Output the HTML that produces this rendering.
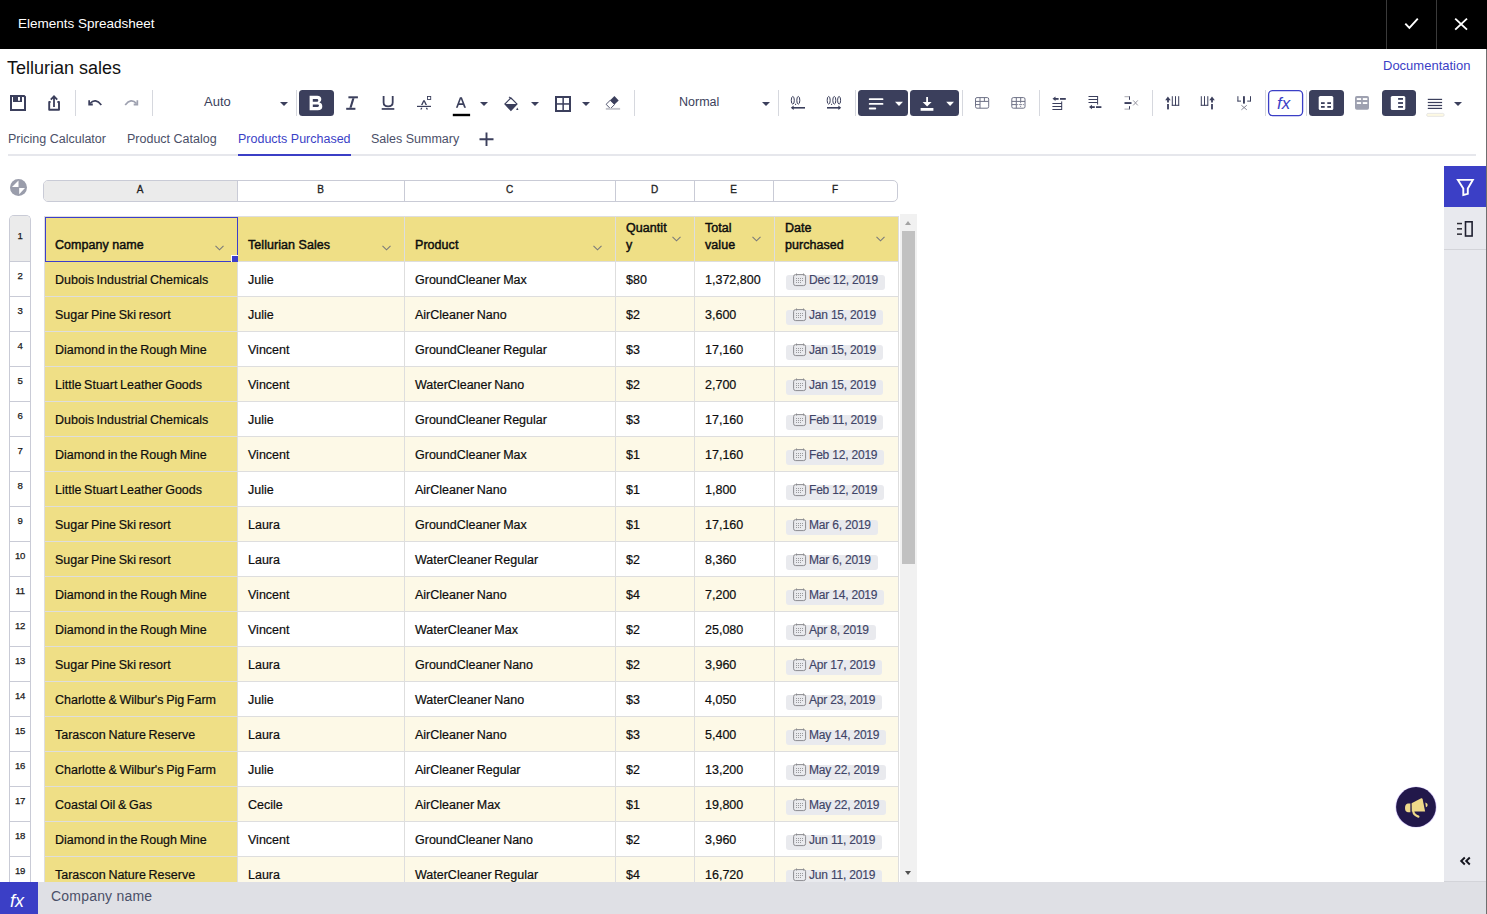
<!DOCTYPE html>
<html><head><meta charset="utf-8">
<style>
*{margin:0;padding:0;box-sizing:border-box}
html,body{width:1487px;height:914px;overflow:hidden;background:#fff;font-family:"Liberation Sans",sans-serif;color:#1a1a1a}
.a{position:absolute}
#title{left:0;top:0;width:1487px;height:49px;background:#000}
#title .t{left:18px;top:16px;font-size:13.5px;color:#fff;line-height:16px;white-space:nowrap}
.vdiv{width:1px;background:#3a3a3a;top:0;height:49px}
#rline{left:1486px;top:49px;width:1px;height:865px;background:#6f6f6f}
.sep{width:1px;height:26px;top:90px;background:#d6d8de}
.ink{fill:#3b3f5c}
.tb{top:90px;height:26px;border-radius:4px;background:#3b3f5c}
.tri{width:0;height:0;border-left:4px solid transparent;border-right:4px solid transparent;border-top:4px solid #3b3f5c}
.colL{font-size:10px;line-height:12px;text-align:center;color:#1e1e1e;-webkit-text-stroke:0.3px #1e1e1e}
.rn{left:10px;width:20px;text-align:center;font-size:9.6px;line-height:12px;color:#1a1a1a;letter-spacing:-0.4px;-webkit-text-stroke:0.25px #1a1a1a}
.hd{font-size:12.5px;line-height:14px;color:#0d0d0d;white-space:nowrap;-webkit-text-stroke:0.45px #0d0d0d;letter-spacing:0.05px}
.dt{font-size:12.5px;line-height:15px;color:#0d0d0d;white-space:nowrap;-webkit-text-stroke:0.2px #0d0d0d;word-spacing:-0.8px}
.chip{height:15px;font-size:12px;line-height:15px;background:#e9eaee;border-radius:3px;padding:0 7px 0 23px;white-space:nowrap}
.dtx{position:relative;top:-2px;letter-spacing:-0.2px;-webkit-text-stroke:0.15px #3f4466;display:inline-block;font-size:12px;line-height:15px;color:#3f4466;white-space:nowrap}
.tab{top:132px;font-size:12.5px;color:#4b4f68;line-height:15px;white-space:nowrap}
</style></head><body>
<div id="title" class="a"><div class="t a">Elements Spreadsheet</div></div>
<div class="a vdiv" style="left:1386px"></div>
<div class="a vdiv" style="left:1436px"></div>
<div id="rline" class="a"></div>

<div class="a" style="left:7px;top:58px;font-size:18px;line-height:20px;color:#111;white-space:nowrap">Tellurian sales</div>
<div class="a" style="left:1383px;top:58px;font-size:13px;line-height:15px;color:#3b3fc6;white-space:nowrap">Documentation</div>

<!-- TOOLBAR -->
<svg class="a" style="left:0;top:0" width="1487" height="160" viewBox="0 0 1487 160">
<defs><path id="tri" d="M0 0 H8 L4 4 Z"/></defs>
<!-- separators -->
<g fill="#d6d8de">
<rect x="75" y="90" width="1" height="26"/><rect x="152" y="90" width="1" height="26"/>
<rect x="296" y="90" width="1" height="26"/><rect x="634" y="90" width="1" height="26"/>
<rect x="778" y="90" width="1" height="26"/><rect x="855" y="90" width="1" height="26"/>
<rect x="962" y="90" width="1" height="26"/><rect x="1039" y="90" width="1" height="26"/>
<rect x="1152" y="90" width="1" height="26"/><rect x="1265" y="90" width="1" height="26"/>
<rect x="1306" y="90" width="1" height="26"/>
</g>
<g fill="#3b3f5c" stroke="none">
<!-- save -->
<path d="M11 96 H24 L25 97 V110 H11 Z" fill="none" stroke="#3b3f5c" stroke-width="2"/>
<rect x="13" y="96" width="9" height="6"/>
<rect x="18" y="97" width="2" height="3.7" fill="#fff"/>
<!-- share -->
<path d="M50.6 102 H49.2 V109.8 H59 V102 H57.4" fill="none" stroke="#3b3f5c" stroke-width="1.9" stroke-linejoin="round"/>
<path d="M54 107 V96.5 M50.8 99.6 L54 96.3 L57.2 99.6" fill="none" stroke="#3b3f5c" stroke-width="1.8"/>
<!-- undo -->
<path d="M90 103.5 Q95.5 97.5 101.3 105" fill="none" stroke="#3b3f5c" stroke-width="1.7"/>
<path d="M88.3 100.3 H90 V103.6 H92.8 V105.4 H88.3 Z"/>
<!-- redo -->
<path d="M125.2 105 Q131 97.5 136.5 103.5" fill="none" stroke="#9ea1b0" stroke-width="1.7"/>
<path d="M138.2 100.3 H136.5 V103.6 H133.7 V105.4 H138.2 Z" fill="#9ea1b0"/>
<!-- arrows -->
<use href="#tri" x="280" y="102"/>
<use href="#tri" x="480" y="102"/>
<use href="#tri" x="531" y="102"/>
<use href="#tri" x="582" y="102"/>
<use href="#tri" x="762" y="102"/>
<use href="#tri" x="1454" y="102"/>
</g>
<!-- bold button -->
<rect x="299" y="90" width="35" height="26" rx="3.5" fill="#3b3f5c"/>
<path d="M309.6 95.7 H317.2 Q321.3 95.7 321.3 99.3 Q321.3 101.9 319.4 102.6 Q322.3 103.4 322.3 106.4 Q322.3 110.2 317.8 110.2 H309.6 Z M312.8 99.1 V101.7 H317.1 Q318.3 101.7 318.3 100.4 Q318.3 99.1 317.1 99.1 Z M312.8 104.4 V106.9 H317.7 Q319 106.9 319 105.6 Q319 104.4 317.7 104.4 Z" fill="#fff" fill-rule="evenodd"/>
<!-- italic -->
<g fill="#3b3f5c">
<rect x="348.4" y="96.3" width="9.5" height="2"/>
<rect x="346.2" y="107.8" width="9.2" height="2"/>
<path d="M352.3 98.3 H354.5 L351.6 107.8 H349.4 Z"/>
<!-- underline -->
<path d="M383.6 96 V102.5 Q383.6 106.3 388.1 106.3 Q392.7 106.3 392.7 102.5 V96" fill="none" stroke="#3b3f5c" stroke-width="1.8"/>
<rect x="381.7" y="108.1" width="12.6" height="1.7"/>
<!-- strike/superscript -->
<rect x="417" y="105.8" width="14" height="1.2"/>
<path d="M421 105 L423.3 100.2 H424.7 L427 105 H425.5 L424 101.8 L422.5 105 Z"/>
<path d="M420.3 109.4 L421 107.7 H422.4 L421.8 109.4 Z M426.5 109.4 L425.8 107.7 H427.2 L428 109.4 Z"/>
<rect x="427.5" y="96.5" width="3.2" height="3" fill="none" stroke="#3b3f5c" stroke-width="0.9"/>
<!-- font color A -->
<path d="M455.9 107.7 L459.9 97.2 H461.9 L466 107.7 H464.1 L463.1 105 H458.7 L457.7 107.7 Z M459.3 103.3 H462.5 L460.9 99.1 Z" fill-rule="evenodd"/>
</g>
<rect x="452.8" y="113.8" width="17.3" height="2.4" fill="#000"/>
<!-- fill bucket -->
<path d="M504.9 104 L510.9 97.9 L517 104 L510.9 110.4 Z" fill="none" stroke="#3b3f5c" stroke-width="1.1"/>
<path d="M504.6 104 H517.3 L510.9 110.6 Z" fill="#3b3f5c"/>
<path d="M509 96.8 L511.6 99.2" stroke="#3b3f5c" stroke-width="1.1"/>
<path d="M517.3 107.6 L518.5 110 H516.1 Z" fill="#3b3f5c"/>
<!-- borders -->
<rect x="556" y="97" width="14" height="14" fill="none" stroke="#3b3f5c" stroke-width="2"/>
<rect x="562.4" y="97" width="1.5" height="14" fill="#3b3f5c"/>
<rect x="556" y="103.2" width="14" height="1.5" fill="#3b3f5c"/>
<!-- eraser -->
<path d="M614.4 96.1 L618.7 100.4 L614.5 104.6 L610.2 100.3 Z" fill="#3b3f5c"/>
<path d="M610.2 100.3 L614.5 104.6 L610.4 108.7 L606.1 104.3 Z" fill="none" stroke="#3b3f5c" stroke-width="0.9"/>
<rect x="605.8" y="107.9" width="14.3" height="1.9" fill="#c3c4cb"/>
<!-- decimals -->
<g fill="none" stroke="#3b3f5c" stroke-width="1">
<ellipse cx="792.8" cy="100.3" rx="1.5" ry="3.8"/>
<ellipse cx="798.3" cy="100.3" rx="1.5" ry="3.8"/>
<ellipse cx="828.7" cy="100.3" rx="1.5" ry="3.8"/>
<ellipse cx="834.3" cy="100.3" rx="1.5" ry="3.8"/>
<ellipse cx="839.1" cy="100.3" rx="1.5" ry="3.8"/>
</g>
<g fill="#3b3f5c">
<rect x="795" y="103.8" width="1.1" height="1.1"/>
<rect x="831" y="103.8" width="1.1" height="1.1"/>
<rect x="792" y="107" width="13" height="1.6"/>
<path d="M790.8 107.8 L793.6 105.6 V110 Z"/>
<rect x="827" y="107" width="13" height="1.6"/>
<path d="M841.2 107.8 L838.4 105.6 V110 Z"/>
</g>
<!-- dark align buttons -->
<rect x="858" y="90" width="50" height="26" rx="3.5" fill="#3b3f5c"/>
<rect x="910" y="90" width="49" height="26" rx="3.5" fill="#3b3f5c"/>
<g fill="#fff">
<rect x="868.8" y="98.2" width="14.6" height="1.9" rx="0.9"/>
<rect x="868.8" y="102.9" width="14.6" height="1.9" rx="0.9"/>
<rect x="868.8" y="107.6" width="7.4" height="1.9" rx="0.9"/>
<path d="M895 101.8 H903 L899 106 Z"/>
<rect x="926.2" y="97" width="1.8" height="7"/>
<path d="M922.6 102 L927.1 106.6 L931.6 102 Z"/>
<rect x="920.6" y="108" width="12.8" height="2.8"/>
<path d="M946.2 101.8 H954 L950.1 106 Z"/>
</g>
<!-- table icons -->
<g fill="none" stroke="#6e7186" stroke-width="1">
<rect x="975.5" y="97.6" width="13.2" height="10.6" rx="1.5"/>
<path d="M975.5 101.4 H988.7 M980 97.6 V108.2 M984.4 97.6 V101.4 M975.5 104.6 H980"/>
<rect x="1011.8" y="97.6" width="13.2" height="10.6" rx="1.5"/>
<path d="M1011.8 101.4 H1025 M1016.3 97.6 V108.2 M1020.7 97.6 V101.4 M1011.8 104.6 H1016.3"/>
<path d="M1016.8 104.6 H1024.6 M1020.6 101.8 V107.6" stroke-dasharray="1 1"/>
</g>
<!-- insert row above -->
<g fill="#3b3f5c">
<path d="M1052.5 98.8 L1055.5 96.6 V101 Z"/>
<rect x="1055" y="98" width="3.6" height="1.8"/>
<rect x="1060" y="98" width="5.8" height="1.8"/>
<rect x="1052.4" y="103" width="9.6" height="1"/>
<rect x="1052.4" y="106" width="9.6" height="1"/>
<rect x="1052.4" y="109" width="9.6" height="1"/>
<rect x="1061.2" y="101.4" width="1" height="8.6"/>
<!-- insert row below -->
<rect x="1088.5" y="96" width="9.4" height="1"/>
<rect x="1088.5" y="99" width="9.4" height="1"/>
<rect x="1088.5" y="102" width="9.4" height="1"/>
<rect x="1097.1" y="96" width="1" height="8.6"/>
<path d="M1089 107 L1092 104.8 V109.2 Z"/>
<rect x="1091.5" y="106.2" width="3.3" height="1.8"/>
<rect x="1096" y="106.2" width="5.4" height="1.8"/>
<!-- delete row -->
<rect x="1124.5" y="102.1" width="7" height="1.9"/>
<rect x="1129" y="96.2" width="1" height="3.6"/>
<rect x="1129" y="106.2" width="1" height="3.2"/>
</g>
<rect x="1124.5" y="96.2" width="5" height="1" fill="#a8a8b0"/>
<rect x="1124.5" y="108.6" width="5" height="1" fill="#a8a8b0"/>
<path d="M1133.2 100.4 L1137.8 105.4 M1137.8 100.4 L1133.2 105.4" stroke="#8a8a96" stroke-width="0.9"/>
<!-- insert col left -->
<g fill="#3b3f5c">
<path d="M1165.2 100.2 L1167.9 96.6 L1170.7 100.2 Z"/>
<rect x="1167.1" y="99.5" width="1.8" height="3"/>
<rect x="1167.1" y="104" width="1.8" height="5.4"/>
<rect x="1171.8" y="96.2" width="1" height="9.4"/>
<rect x="1175" y="96.2" width="1" height="9.4"/>
<rect x="1178.2" y="96.2" width="1" height="9.4"/>
<rect x="1171.8" y="104.8" width="7.4" height="1"/>
<!-- insert col right -->
<rect x="1200.8" y="96.2" width="1" height="9.4"/>
<rect x="1204" y="96.2" width="1" height="9.4"/>
<rect x="1207.3" y="96.2" width="1" height="9.4"/>
<rect x="1200.8" y="104.8" width="7.4" height="1"/>
<path d="M1209.3 100.2 L1212 96.6 L1214.8 100.2 Z"/>
<rect x="1211.1" y="99.5" width="1.8" height="3"/>
<rect x="1211.1" y="104" width="1.8" height="5.4"/>
<!-- delete col -->
<rect x="1237.4" y="96.2" width="1" height="5.2"/>
<rect x="1237.4" y="100.6" width="3.6" height="1"/>
<rect x="1250" y="96.2" width="1" height="5.2"/>
<rect x="1247.2" y="100.6" width="3.6" height="1"/>
<rect x="1243" y="96.2" width="1.9" height="7.4"/>
</g>
<path d="M1241.4 105.3 L1246.8 109.8 M1246.8 105.3 L1241.4 109.8" stroke="#7a7a8a" stroke-width="0.9"/>
<!-- fx button -->
<rect x="1268.6" y="90.6" width="34" height="25" rx="4" fill="#fff" stroke="#3b3fc6" stroke-width="1.3"/>
<!-- dark button 3 -->
<rect x="1309" y="90" width="35" height="26" rx="3.5" fill="#3b3f5c"/>
<rect x="1318.7" y="96" width="14.6" height="14" rx="1.6" fill="#fff"/>
<g fill="#3b3f5c">
<rect x="1321" y="102.2" width="3.7" height="1.8"/><rect x="1327.3" y="102.2" width="3.7" height="1.8"/>
<rect x="1321" y="106" width="3.7" height="1.8"/><rect x="1327.3" y="106" width="3.7" height="1.8"/>
</g>
<!-- gray icon -->
<rect x="1355" y="96" width="14" height="13.8" rx="1.8" fill="#9ea1b0"/>
<g fill="#fff">
<rect x="1356.8" y="98.1" width="4.3" height="1.9"/><rect x="1362.8" y="98.1" width="4.5" height="1.9"/>
<rect x="1356.8" y="102.1" width="4.3" height="1.9"/><rect x="1362.8" y="102.1" width="4.5" height="1.9"/>
</g>
<!-- dark button 4 -->
<rect x="1382" y="90" width="34" height="26" rx="3.5" fill="#3b3f5c"/>
<rect x="1390.8" y="96" width="14.5" height="14" rx="1.6" fill="#fff"/>
<g fill="#3b3f5c">
<rect x="1398.1" y="98" width="4.9" height="1.8"/>
<rect x="1398.1" y="102.1" width="4.9" height="1.8"/>
<rect x="1398.1" y="106" width="4.9" height="1.8"/>
<!-- lines icon -->
<rect x="1427.8" y="98.8" width="14.3" height="1.2"/>
<rect x="1427.8" y="101.9" width="14.3" height="1.2"/>
<rect x="1427.8" y="104.9" width="14.3" height="1.2"/>
<rect x="1427.8" y="107.8" width="14.3" height="1.2"/>
</g>
<rect x="1426.6" y="113.4" width="17.6" height="3" rx="1.5" fill="#fdf9e3" stroke="#e2e2e2" stroke-width="0.8"/>
</svg>
<div class="a" style="left:204px;top:94px;font-size:13px;line-height:15px;color:#3b3f5c;white-space:nowrap">Auto</div>
<div class="a" style="left:679px;top:95px;font-size:12.5px;line-height:15px;color:#3b3f5c;white-space:nowrap">Normal</div>
<div class="a" style="left:1277px;top:94px;font-size:17px;line-height:20px;font-style:italic;color:#3b3fc6;white-space:nowrap">fx</div>


<!-- TABS -->
<div class="a tab" style="left:8px">Pricing Calculator</div>
<div class="a tab" style="left:127px">Product Catalog</div>
<div class="a tab" style="left:238px;color:#3b3fc6">Products Purchased</div>
<div class="a tab" style="left:371px">Sales Summary</div>
<div class="a" style="left:8px;top:154px;width:1468px;height:2px;background:#e6e7ec"></div>
<div class="a" style="left:238px;top:154px;width:113px;height:2px;background:#3b3fc6"></div>

<!-- GRID -->
<div class="a" style="left:0;top:0;width:1487px;height:882px;overflow:hidden">
<div class="a" style="left:9px;top:215px;width:22px;height:700px;border:1px solid #c9cbd6;border-bottom:none;border-radius:5px 5px 0 0;background:#fff"></div>
<div class="a" style="left:10px;top:216px;width:20px;height:45px;background:#ebebeb;border-radius:4px 4px 0 0"></div>
<div class="a" style="left:43px;top:180px;width:855px;height:22px;border:1px solid #c9cbd6;border-radius:5px;background:#fff;overflow:hidden"><div class="a" style="left:0;top:0;width:193px;height:20px;background:#ebebeb"></div></div>
<div class="a colL" style="left:43px;width:194px;top:184px">A</div>
<div class="a" style="left:237px;top:181px;width:1px;height:20px;background:#c9cbd6"></div>
<div class="a colL" style="left:237px;width:167px;top:184px">B</div>
<div class="a" style="left:404px;top:181px;width:1px;height:20px;background:#c9cbd6"></div>
<div class="a colL" style="left:404px;width:211px;top:184px">C</div>
<div class="a" style="left:615px;top:181px;width:1px;height:20px;background:#c9cbd6"></div>
<div class="a colL" style="left:615px;width:79px;top:184px">D</div>
<div class="a" style="left:694px;top:181px;width:1px;height:20px;background:#c9cbd6"></div>
<div class="a colL" style="left:694px;width:79px;top:184px">E</div>
<div class="a" style="left:773px;top:181px;width:1px;height:20px;background:#c9cbd6"></div>
<div class="a colL" style="left:773px;width:124px;top:184px">F</div>
<div class="a" style="left:44px;top:216px;width:855px;height:676px;background:#dedede"></div>
<div class="a" style="left:45px;top:217px;width:192px;height:44px;background:#efdf86"></div>
<div class="a" style="left:238px;top:217px;width:166px;height:44px;background:#efdf86"></div>
<div class="a" style="left:405px;top:217px;width:210px;height:44px;background:#efdf86"></div>
<div class="a" style="left:616px;top:217px;width:78px;height:44px;background:#efdf86"></div>
<div class="a" style="left:695px;top:217px;width:79px;height:44px;background:#efdf86"></div>
<div class="a" style="left:775px;top:217px;width:123px;height:44px;background:#efdf86"></div>
<div class="a" style="left:45px;top:262px;width:192px;height:34px;background:#efdf86"></div>
<div class="a" style="left:238px;top:262px;width:166px;height:34px;background:#ffffff"></div>
<div class="a" style="left:405px;top:262px;width:210px;height:34px;background:#ffffff"></div>
<div class="a" style="left:616px;top:262px;width:78px;height:34px;background:#ffffff"></div>
<div class="a" style="left:695px;top:262px;width:79px;height:34px;background:#ffffff"></div>
<div class="a" style="left:775px;top:262px;width:123px;height:34px;background:#ffffff"></div>
<div class="a" style="left:45px;top:297px;width:192px;height:34px;background:#efdf86"></div>
<div class="a" style="left:238px;top:297px;width:166px;height:34px;background:#fdf9e7"></div>
<div class="a" style="left:405px;top:297px;width:210px;height:34px;background:#fdf9e7"></div>
<div class="a" style="left:616px;top:297px;width:78px;height:34px;background:#fdf9e7"></div>
<div class="a" style="left:695px;top:297px;width:79px;height:34px;background:#fdf9e7"></div>
<div class="a" style="left:775px;top:297px;width:123px;height:34px;background:#fdf9e7"></div>
<div class="a" style="left:45px;top:332px;width:192px;height:34px;background:#efdf86"></div>
<div class="a" style="left:238px;top:332px;width:166px;height:34px;background:#ffffff"></div>
<div class="a" style="left:405px;top:332px;width:210px;height:34px;background:#ffffff"></div>
<div class="a" style="left:616px;top:332px;width:78px;height:34px;background:#ffffff"></div>
<div class="a" style="left:695px;top:332px;width:79px;height:34px;background:#ffffff"></div>
<div class="a" style="left:775px;top:332px;width:123px;height:34px;background:#ffffff"></div>
<div class="a" style="left:45px;top:367px;width:192px;height:34px;background:#efdf86"></div>
<div class="a" style="left:238px;top:367px;width:166px;height:34px;background:#fdf9e7"></div>
<div class="a" style="left:405px;top:367px;width:210px;height:34px;background:#fdf9e7"></div>
<div class="a" style="left:616px;top:367px;width:78px;height:34px;background:#fdf9e7"></div>
<div class="a" style="left:695px;top:367px;width:79px;height:34px;background:#fdf9e7"></div>
<div class="a" style="left:775px;top:367px;width:123px;height:34px;background:#fdf9e7"></div>
<div class="a" style="left:45px;top:402px;width:192px;height:34px;background:#efdf86"></div>
<div class="a" style="left:238px;top:402px;width:166px;height:34px;background:#ffffff"></div>
<div class="a" style="left:405px;top:402px;width:210px;height:34px;background:#ffffff"></div>
<div class="a" style="left:616px;top:402px;width:78px;height:34px;background:#ffffff"></div>
<div class="a" style="left:695px;top:402px;width:79px;height:34px;background:#ffffff"></div>
<div class="a" style="left:775px;top:402px;width:123px;height:34px;background:#ffffff"></div>
<div class="a" style="left:45px;top:437px;width:192px;height:34px;background:#efdf86"></div>
<div class="a" style="left:238px;top:437px;width:166px;height:34px;background:#fdf9e7"></div>
<div class="a" style="left:405px;top:437px;width:210px;height:34px;background:#fdf9e7"></div>
<div class="a" style="left:616px;top:437px;width:78px;height:34px;background:#fdf9e7"></div>
<div class="a" style="left:695px;top:437px;width:79px;height:34px;background:#fdf9e7"></div>
<div class="a" style="left:775px;top:437px;width:123px;height:34px;background:#fdf9e7"></div>
<div class="a" style="left:45px;top:472px;width:192px;height:34px;background:#efdf86"></div>
<div class="a" style="left:238px;top:472px;width:166px;height:34px;background:#ffffff"></div>
<div class="a" style="left:405px;top:472px;width:210px;height:34px;background:#ffffff"></div>
<div class="a" style="left:616px;top:472px;width:78px;height:34px;background:#ffffff"></div>
<div class="a" style="left:695px;top:472px;width:79px;height:34px;background:#ffffff"></div>
<div class="a" style="left:775px;top:472px;width:123px;height:34px;background:#ffffff"></div>
<div class="a" style="left:45px;top:507px;width:192px;height:34px;background:#efdf86"></div>
<div class="a" style="left:238px;top:507px;width:166px;height:34px;background:#fdf9e7"></div>
<div class="a" style="left:405px;top:507px;width:210px;height:34px;background:#fdf9e7"></div>
<div class="a" style="left:616px;top:507px;width:78px;height:34px;background:#fdf9e7"></div>
<div class="a" style="left:695px;top:507px;width:79px;height:34px;background:#fdf9e7"></div>
<div class="a" style="left:775px;top:507px;width:123px;height:34px;background:#fdf9e7"></div>
<div class="a" style="left:45px;top:542px;width:192px;height:34px;background:#efdf86"></div>
<div class="a" style="left:238px;top:542px;width:166px;height:34px;background:#ffffff"></div>
<div class="a" style="left:405px;top:542px;width:210px;height:34px;background:#ffffff"></div>
<div class="a" style="left:616px;top:542px;width:78px;height:34px;background:#ffffff"></div>
<div class="a" style="left:695px;top:542px;width:79px;height:34px;background:#ffffff"></div>
<div class="a" style="left:775px;top:542px;width:123px;height:34px;background:#ffffff"></div>
<div class="a" style="left:45px;top:577px;width:192px;height:34px;background:#efdf86"></div>
<div class="a" style="left:238px;top:577px;width:166px;height:34px;background:#fdf9e7"></div>
<div class="a" style="left:405px;top:577px;width:210px;height:34px;background:#fdf9e7"></div>
<div class="a" style="left:616px;top:577px;width:78px;height:34px;background:#fdf9e7"></div>
<div class="a" style="left:695px;top:577px;width:79px;height:34px;background:#fdf9e7"></div>
<div class="a" style="left:775px;top:577px;width:123px;height:34px;background:#fdf9e7"></div>
<div class="a" style="left:45px;top:612px;width:192px;height:34px;background:#efdf86"></div>
<div class="a" style="left:238px;top:612px;width:166px;height:34px;background:#ffffff"></div>
<div class="a" style="left:405px;top:612px;width:210px;height:34px;background:#ffffff"></div>
<div class="a" style="left:616px;top:612px;width:78px;height:34px;background:#ffffff"></div>
<div class="a" style="left:695px;top:612px;width:79px;height:34px;background:#ffffff"></div>
<div class="a" style="left:775px;top:612px;width:123px;height:34px;background:#ffffff"></div>
<div class="a" style="left:45px;top:647px;width:192px;height:34px;background:#efdf86"></div>
<div class="a" style="left:238px;top:647px;width:166px;height:34px;background:#fdf9e7"></div>
<div class="a" style="left:405px;top:647px;width:210px;height:34px;background:#fdf9e7"></div>
<div class="a" style="left:616px;top:647px;width:78px;height:34px;background:#fdf9e7"></div>
<div class="a" style="left:695px;top:647px;width:79px;height:34px;background:#fdf9e7"></div>
<div class="a" style="left:775px;top:647px;width:123px;height:34px;background:#fdf9e7"></div>
<div class="a" style="left:45px;top:682px;width:192px;height:34px;background:#efdf86"></div>
<div class="a" style="left:238px;top:682px;width:166px;height:34px;background:#ffffff"></div>
<div class="a" style="left:405px;top:682px;width:210px;height:34px;background:#ffffff"></div>
<div class="a" style="left:616px;top:682px;width:78px;height:34px;background:#ffffff"></div>
<div class="a" style="left:695px;top:682px;width:79px;height:34px;background:#ffffff"></div>
<div class="a" style="left:775px;top:682px;width:123px;height:34px;background:#ffffff"></div>
<div class="a" style="left:45px;top:717px;width:192px;height:34px;background:#efdf86"></div>
<div class="a" style="left:238px;top:717px;width:166px;height:34px;background:#fdf9e7"></div>
<div class="a" style="left:405px;top:717px;width:210px;height:34px;background:#fdf9e7"></div>
<div class="a" style="left:616px;top:717px;width:78px;height:34px;background:#fdf9e7"></div>
<div class="a" style="left:695px;top:717px;width:79px;height:34px;background:#fdf9e7"></div>
<div class="a" style="left:775px;top:717px;width:123px;height:34px;background:#fdf9e7"></div>
<div class="a" style="left:45px;top:752px;width:192px;height:34px;background:#efdf86"></div>
<div class="a" style="left:238px;top:752px;width:166px;height:34px;background:#ffffff"></div>
<div class="a" style="left:405px;top:752px;width:210px;height:34px;background:#ffffff"></div>
<div class="a" style="left:616px;top:752px;width:78px;height:34px;background:#ffffff"></div>
<div class="a" style="left:695px;top:752px;width:79px;height:34px;background:#ffffff"></div>
<div class="a" style="left:775px;top:752px;width:123px;height:34px;background:#ffffff"></div>
<div class="a" style="left:45px;top:787px;width:192px;height:34px;background:#efdf86"></div>
<div class="a" style="left:238px;top:787px;width:166px;height:34px;background:#fdf9e7"></div>
<div class="a" style="left:405px;top:787px;width:210px;height:34px;background:#fdf9e7"></div>
<div class="a" style="left:616px;top:787px;width:78px;height:34px;background:#fdf9e7"></div>
<div class="a" style="left:695px;top:787px;width:79px;height:34px;background:#fdf9e7"></div>
<div class="a" style="left:775px;top:787px;width:123px;height:34px;background:#fdf9e7"></div>
<div class="a" style="left:45px;top:822px;width:192px;height:34px;background:#efdf86"></div>
<div class="a" style="left:238px;top:822px;width:166px;height:34px;background:#ffffff"></div>
<div class="a" style="left:405px;top:822px;width:210px;height:34px;background:#ffffff"></div>
<div class="a" style="left:616px;top:822px;width:78px;height:34px;background:#ffffff"></div>
<div class="a" style="left:695px;top:822px;width:79px;height:34px;background:#ffffff"></div>
<div class="a" style="left:775px;top:822px;width:123px;height:34px;background:#ffffff"></div>
<div class="a" style="left:45px;top:857px;width:192px;height:34px;background:#efdf86"></div>
<div class="a" style="left:238px;top:857px;width:166px;height:34px;background:#fdf9e7"></div>
<div class="a" style="left:405px;top:857px;width:210px;height:34px;background:#fdf9e7"></div>
<div class="a" style="left:616px;top:857px;width:78px;height:34px;background:#fdf9e7"></div>
<div class="a" style="left:695px;top:857px;width:79px;height:34px;background:#fdf9e7"></div>
<div class="a" style="left:775px;top:857px;width:123px;height:34px;background:#fdf9e7"></div>
<div class="a rn" style="top:230px">1</div>
<div class="a" style="left:10px;top:261px;width:20px;height:1px;background:#c9cbd6"></div>
<div class="a rn" style="top:270px">2</div>
<div class="a" style="left:10px;top:296px;width:20px;height:1px;background:#c9cbd6"></div>
<div class="a rn" style="top:305px">3</div>
<div class="a" style="left:10px;top:331px;width:20px;height:1px;background:#c9cbd6"></div>
<div class="a rn" style="top:340px">4</div>
<div class="a" style="left:10px;top:366px;width:20px;height:1px;background:#c9cbd6"></div>
<div class="a rn" style="top:375px">5</div>
<div class="a" style="left:10px;top:401px;width:20px;height:1px;background:#c9cbd6"></div>
<div class="a rn" style="top:410px">6</div>
<div class="a" style="left:10px;top:436px;width:20px;height:1px;background:#c9cbd6"></div>
<div class="a rn" style="top:445px">7</div>
<div class="a" style="left:10px;top:471px;width:20px;height:1px;background:#c9cbd6"></div>
<div class="a rn" style="top:480px">8</div>
<div class="a" style="left:10px;top:506px;width:20px;height:1px;background:#c9cbd6"></div>
<div class="a rn" style="top:515px">9</div>
<div class="a" style="left:10px;top:541px;width:20px;height:1px;background:#c9cbd6"></div>
<div class="a rn" style="top:550px">10</div>
<div class="a" style="left:10px;top:576px;width:20px;height:1px;background:#c9cbd6"></div>
<div class="a rn" style="top:585px">11</div>
<div class="a" style="left:10px;top:611px;width:20px;height:1px;background:#c9cbd6"></div>
<div class="a rn" style="top:620px">12</div>
<div class="a" style="left:10px;top:646px;width:20px;height:1px;background:#c9cbd6"></div>
<div class="a rn" style="top:655px">13</div>
<div class="a" style="left:10px;top:681px;width:20px;height:1px;background:#c9cbd6"></div>
<div class="a rn" style="top:690px">14</div>
<div class="a" style="left:10px;top:716px;width:20px;height:1px;background:#c9cbd6"></div>
<div class="a rn" style="top:725px">15</div>
<div class="a" style="left:10px;top:751px;width:20px;height:1px;background:#c9cbd6"></div>
<div class="a rn" style="top:760px">16</div>
<div class="a" style="left:10px;top:786px;width:20px;height:1px;background:#c9cbd6"></div>
<div class="a rn" style="top:795px">17</div>
<div class="a" style="left:10px;top:821px;width:20px;height:1px;background:#c9cbd6"></div>
<div class="a rn" style="top:830px">18</div>
<div class="a" style="left:10px;top:856px;width:20px;height:1px;background:#c9cbd6"></div>
<div class="a rn" style="top:865px">19</div>
<div class="a hd" style="left:55px;top:238px">Company name</div>
<svg class="a" style="left:215px;top:245px" width="9" height="6" viewBox="0 0 9 6"><path d="M0.5 0.8 L4.5 4.8 L8.5 0.8" fill="none" stroke="#7a7a7a" stroke-width="1.1"/></svg>
<div class="a hd" style="left:248px;top:238px">Tellurian Sales</div>
<svg class="a" style="left:382px;top:245px" width="9" height="6" viewBox="0 0 9 6"><path d="M0.5 0.8 L4.5 4.8 L8.5 0.8" fill="none" stroke="#7a7a7a" stroke-width="1.1"/></svg>
<div class="a hd" style="left:415px;top:238px">Product</div>
<svg class="a" style="left:593px;top:245px" width="9" height="6" viewBox="0 0 9 6"><path d="M0.5 0.8 L4.5 4.8 L8.5 0.8" fill="none" stroke="#7a7a7a" stroke-width="1.1"/></svg>
<div class="a hd" style="left:626px;top:221px">Quantit</div>
<div class="a hd" style="left:626px;top:238px">y</div>
<svg class="a" style="left:672px;top:236px" width="9" height="6" viewBox="0 0 9 6"><path d="M0.5 0.8 L4.5 4.8 L8.5 0.8" fill="none" stroke="#7a7a7a" stroke-width="1.1"/></svg>
<div class="a hd" style="left:705px;top:221px">Total</div>
<div class="a hd" style="left:705px;top:238px">value</div>
<svg class="a" style="left:752px;top:236px" width="9" height="6" viewBox="0 0 9 6"><path d="M0.5 0.8 L4.5 4.8 L8.5 0.8" fill="none" stroke="#7a7a7a" stroke-width="1.1"/></svg>
<div class="a hd" style="left:785px;top:221px">Date</div>
<div class="a hd" style="left:785px;top:238px">purchased</div>
<svg class="a" style="left:876px;top:236px" width="9" height="6" viewBox="0 0 9 6"><path d="M0.5 0.8 L4.5 4.8 L8.5 0.8" fill="none" stroke="#7a7a7a" stroke-width="1.1"/></svg>
<div class="a dt" style="left:55px;top:273px">Dubois Industrial Chemicals</div>
<div class="a dt" style="left:248px;top:273px">Julie</div>
<div class="a dt" style="left:415px;top:273px">GroundCleaner Max</div>
<div class="a dt" style="left:626px;top:273px">$80</div>
<div class="a dt" style="left:705px;top:273px">1,372,800</div>
<div class="a chip" style="left:786px;top:275px"><svg class="a" style="left:7px;top:-2px" width="14" height="14" viewBox="0 0 14 14"><rect x="0.6" y="1.6" width="12" height="11" rx="2" fill="none" stroke="#8c8c90" stroke-width="1"/><line x1="3.5" y1="0.5" x2="3.5" y2="2.5" stroke="#8c8c90"/><line x1="10.5" y1="0.5" x2="10.5" y2="2.5" stroke="#8c8c90"/><g fill="#9a9a9e"><rect x="3" y="5" width="1" height="1"/><rect x="5" y="5" width="1" height="1"/><rect x="7" y="5" width="1" height="1"/><rect x="9" y="5" width="1" height="1"/><rect x="3" y="7" width="1" height="1"/><rect x="5" y="7" width="1" height="1"/><rect x="7" y="7" width="1" height="1"/><rect x="9" y="7" width="1" height="1"/><rect x="3" y="9" width="1" height="1"/><rect x="5" y="9" width="1" height="1"/><rect x="7" y="9" width="1" height="1"/></g></svg><span class="dtx">Dec 12, 2019</span></div>
<div class="a dt" style="left:55px;top:308px">Sugar Pine Ski resort</div>
<div class="a dt" style="left:248px;top:308px">Julie</div>
<div class="a dt" style="left:415px;top:308px">AirCleaner Nano</div>
<div class="a dt" style="left:626px;top:308px">$2</div>
<div class="a dt" style="left:705px;top:308px">3,600</div>
<div class="a chip" style="left:786px;top:310px"><svg class="a" style="left:7px;top:-2px" width="14" height="14" viewBox="0 0 14 14"><rect x="0.6" y="1.6" width="12" height="11" rx="2" fill="none" stroke="#8c8c90" stroke-width="1"/><line x1="3.5" y1="0.5" x2="3.5" y2="2.5" stroke="#8c8c90"/><line x1="10.5" y1="0.5" x2="10.5" y2="2.5" stroke="#8c8c90"/><g fill="#9a9a9e"><rect x="3" y="5" width="1" height="1"/><rect x="5" y="5" width="1" height="1"/><rect x="7" y="5" width="1" height="1"/><rect x="9" y="5" width="1" height="1"/><rect x="3" y="7" width="1" height="1"/><rect x="5" y="7" width="1" height="1"/><rect x="7" y="7" width="1" height="1"/><rect x="9" y="7" width="1" height="1"/><rect x="3" y="9" width="1" height="1"/><rect x="5" y="9" width="1" height="1"/><rect x="7" y="9" width="1" height="1"/></g></svg><span class="dtx">Jan 15, 2019</span></div>
<div class="a dt" style="left:55px;top:343px">Diamond in the Rough Mine</div>
<div class="a dt" style="left:248px;top:343px">Vincent</div>
<div class="a dt" style="left:415px;top:343px">GroundCleaner Regular</div>
<div class="a dt" style="left:626px;top:343px">$3</div>
<div class="a dt" style="left:705px;top:343px">17,160</div>
<div class="a chip" style="left:786px;top:345px"><svg class="a" style="left:7px;top:-2px" width="14" height="14" viewBox="0 0 14 14"><rect x="0.6" y="1.6" width="12" height="11" rx="2" fill="none" stroke="#8c8c90" stroke-width="1"/><line x1="3.5" y1="0.5" x2="3.5" y2="2.5" stroke="#8c8c90"/><line x1="10.5" y1="0.5" x2="10.5" y2="2.5" stroke="#8c8c90"/><g fill="#9a9a9e"><rect x="3" y="5" width="1" height="1"/><rect x="5" y="5" width="1" height="1"/><rect x="7" y="5" width="1" height="1"/><rect x="9" y="5" width="1" height="1"/><rect x="3" y="7" width="1" height="1"/><rect x="5" y="7" width="1" height="1"/><rect x="7" y="7" width="1" height="1"/><rect x="9" y="7" width="1" height="1"/><rect x="3" y="9" width="1" height="1"/><rect x="5" y="9" width="1" height="1"/><rect x="7" y="9" width="1" height="1"/></g></svg><span class="dtx">Jan 15, 2019</span></div>
<div class="a dt" style="left:55px;top:378px">Little Stuart Leather Goods</div>
<div class="a dt" style="left:248px;top:378px">Vincent</div>
<div class="a dt" style="left:415px;top:378px">WaterCleaner Nano</div>
<div class="a dt" style="left:626px;top:378px">$2</div>
<div class="a dt" style="left:705px;top:378px">2,700</div>
<div class="a chip" style="left:786px;top:380px"><svg class="a" style="left:7px;top:-2px" width="14" height="14" viewBox="0 0 14 14"><rect x="0.6" y="1.6" width="12" height="11" rx="2" fill="none" stroke="#8c8c90" stroke-width="1"/><line x1="3.5" y1="0.5" x2="3.5" y2="2.5" stroke="#8c8c90"/><line x1="10.5" y1="0.5" x2="10.5" y2="2.5" stroke="#8c8c90"/><g fill="#9a9a9e"><rect x="3" y="5" width="1" height="1"/><rect x="5" y="5" width="1" height="1"/><rect x="7" y="5" width="1" height="1"/><rect x="9" y="5" width="1" height="1"/><rect x="3" y="7" width="1" height="1"/><rect x="5" y="7" width="1" height="1"/><rect x="7" y="7" width="1" height="1"/><rect x="9" y="7" width="1" height="1"/><rect x="3" y="9" width="1" height="1"/><rect x="5" y="9" width="1" height="1"/><rect x="7" y="9" width="1" height="1"/></g></svg><span class="dtx">Jan 15, 2019</span></div>
<div class="a dt" style="left:55px;top:413px">Dubois Industrial Chemicals</div>
<div class="a dt" style="left:248px;top:413px">Julie</div>
<div class="a dt" style="left:415px;top:413px">GroundCleaner Regular</div>
<div class="a dt" style="left:626px;top:413px">$3</div>
<div class="a dt" style="left:705px;top:413px">17,160</div>
<div class="a chip" style="left:786px;top:415px"><svg class="a" style="left:7px;top:-2px" width="14" height="14" viewBox="0 0 14 14"><rect x="0.6" y="1.6" width="12" height="11" rx="2" fill="none" stroke="#8c8c90" stroke-width="1"/><line x1="3.5" y1="0.5" x2="3.5" y2="2.5" stroke="#8c8c90"/><line x1="10.5" y1="0.5" x2="10.5" y2="2.5" stroke="#8c8c90"/><g fill="#9a9a9e"><rect x="3" y="5" width="1" height="1"/><rect x="5" y="5" width="1" height="1"/><rect x="7" y="5" width="1" height="1"/><rect x="9" y="5" width="1" height="1"/><rect x="3" y="7" width="1" height="1"/><rect x="5" y="7" width="1" height="1"/><rect x="7" y="7" width="1" height="1"/><rect x="9" y="7" width="1" height="1"/><rect x="3" y="9" width="1" height="1"/><rect x="5" y="9" width="1" height="1"/><rect x="7" y="9" width="1" height="1"/></g></svg><span class="dtx">Feb 11, 2019</span></div>
<div class="a dt" style="left:55px;top:448px">Diamond in the Rough Mine</div>
<div class="a dt" style="left:248px;top:448px">Vincent</div>
<div class="a dt" style="left:415px;top:448px">GroundCleaner Max</div>
<div class="a dt" style="left:626px;top:448px">$1</div>
<div class="a dt" style="left:705px;top:448px">17,160</div>
<div class="a chip" style="left:786px;top:450px"><svg class="a" style="left:7px;top:-2px" width="14" height="14" viewBox="0 0 14 14"><rect x="0.6" y="1.6" width="12" height="11" rx="2" fill="none" stroke="#8c8c90" stroke-width="1"/><line x1="3.5" y1="0.5" x2="3.5" y2="2.5" stroke="#8c8c90"/><line x1="10.5" y1="0.5" x2="10.5" y2="2.5" stroke="#8c8c90"/><g fill="#9a9a9e"><rect x="3" y="5" width="1" height="1"/><rect x="5" y="5" width="1" height="1"/><rect x="7" y="5" width="1" height="1"/><rect x="9" y="5" width="1" height="1"/><rect x="3" y="7" width="1" height="1"/><rect x="5" y="7" width="1" height="1"/><rect x="7" y="7" width="1" height="1"/><rect x="9" y="7" width="1" height="1"/><rect x="3" y="9" width="1" height="1"/><rect x="5" y="9" width="1" height="1"/><rect x="7" y="9" width="1" height="1"/></g></svg><span class="dtx">Feb 12, 2019</span></div>
<div class="a dt" style="left:55px;top:483px">Little Stuart Leather Goods</div>
<div class="a dt" style="left:248px;top:483px">Julie</div>
<div class="a dt" style="left:415px;top:483px">AirCleaner Nano</div>
<div class="a dt" style="left:626px;top:483px">$1</div>
<div class="a dt" style="left:705px;top:483px">1,800</div>
<div class="a chip" style="left:786px;top:485px"><svg class="a" style="left:7px;top:-2px" width="14" height="14" viewBox="0 0 14 14"><rect x="0.6" y="1.6" width="12" height="11" rx="2" fill="none" stroke="#8c8c90" stroke-width="1"/><line x1="3.5" y1="0.5" x2="3.5" y2="2.5" stroke="#8c8c90"/><line x1="10.5" y1="0.5" x2="10.5" y2="2.5" stroke="#8c8c90"/><g fill="#9a9a9e"><rect x="3" y="5" width="1" height="1"/><rect x="5" y="5" width="1" height="1"/><rect x="7" y="5" width="1" height="1"/><rect x="9" y="5" width="1" height="1"/><rect x="3" y="7" width="1" height="1"/><rect x="5" y="7" width="1" height="1"/><rect x="7" y="7" width="1" height="1"/><rect x="9" y="7" width="1" height="1"/><rect x="3" y="9" width="1" height="1"/><rect x="5" y="9" width="1" height="1"/><rect x="7" y="9" width="1" height="1"/></g></svg><span class="dtx">Feb 12, 2019</span></div>
<div class="a dt" style="left:55px;top:518px">Sugar Pine Ski resort</div>
<div class="a dt" style="left:248px;top:518px">Laura</div>
<div class="a dt" style="left:415px;top:518px">GroundCleaner Max</div>
<div class="a dt" style="left:626px;top:518px">$1</div>
<div class="a dt" style="left:705px;top:518px">17,160</div>
<div class="a chip" style="left:786px;top:520px"><svg class="a" style="left:7px;top:-2px" width="14" height="14" viewBox="0 0 14 14"><rect x="0.6" y="1.6" width="12" height="11" rx="2" fill="none" stroke="#8c8c90" stroke-width="1"/><line x1="3.5" y1="0.5" x2="3.5" y2="2.5" stroke="#8c8c90"/><line x1="10.5" y1="0.5" x2="10.5" y2="2.5" stroke="#8c8c90"/><g fill="#9a9a9e"><rect x="3" y="5" width="1" height="1"/><rect x="5" y="5" width="1" height="1"/><rect x="7" y="5" width="1" height="1"/><rect x="9" y="5" width="1" height="1"/><rect x="3" y="7" width="1" height="1"/><rect x="5" y="7" width="1" height="1"/><rect x="7" y="7" width="1" height="1"/><rect x="9" y="7" width="1" height="1"/><rect x="3" y="9" width="1" height="1"/><rect x="5" y="9" width="1" height="1"/><rect x="7" y="9" width="1" height="1"/></g></svg><span class="dtx">Mar 6, 2019</span></div>
<div class="a dt" style="left:55px;top:553px">Sugar Pine Ski resort</div>
<div class="a dt" style="left:248px;top:553px">Laura</div>
<div class="a dt" style="left:415px;top:553px">WaterCleaner Regular</div>
<div class="a dt" style="left:626px;top:553px">$2</div>
<div class="a dt" style="left:705px;top:553px">8,360</div>
<div class="a chip" style="left:786px;top:555px"><svg class="a" style="left:7px;top:-2px" width="14" height="14" viewBox="0 0 14 14"><rect x="0.6" y="1.6" width="12" height="11" rx="2" fill="none" stroke="#8c8c90" stroke-width="1"/><line x1="3.5" y1="0.5" x2="3.5" y2="2.5" stroke="#8c8c90"/><line x1="10.5" y1="0.5" x2="10.5" y2="2.5" stroke="#8c8c90"/><g fill="#9a9a9e"><rect x="3" y="5" width="1" height="1"/><rect x="5" y="5" width="1" height="1"/><rect x="7" y="5" width="1" height="1"/><rect x="9" y="5" width="1" height="1"/><rect x="3" y="7" width="1" height="1"/><rect x="5" y="7" width="1" height="1"/><rect x="7" y="7" width="1" height="1"/><rect x="9" y="7" width="1" height="1"/><rect x="3" y="9" width="1" height="1"/><rect x="5" y="9" width="1" height="1"/><rect x="7" y="9" width="1" height="1"/></g></svg><span class="dtx">Mar 6, 2019</span></div>
<div class="a dt" style="left:55px;top:588px">Diamond in the Rough Mine</div>
<div class="a dt" style="left:248px;top:588px">Vincent</div>
<div class="a dt" style="left:415px;top:588px">AirCleaner Nano</div>
<div class="a dt" style="left:626px;top:588px">$4</div>
<div class="a dt" style="left:705px;top:588px">7,200</div>
<div class="a chip" style="left:786px;top:590px"><svg class="a" style="left:7px;top:-2px" width="14" height="14" viewBox="0 0 14 14"><rect x="0.6" y="1.6" width="12" height="11" rx="2" fill="none" stroke="#8c8c90" stroke-width="1"/><line x1="3.5" y1="0.5" x2="3.5" y2="2.5" stroke="#8c8c90"/><line x1="10.5" y1="0.5" x2="10.5" y2="2.5" stroke="#8c8c90"/><g fill="#9a9a9e"><rect x="3" y="5" width="1" height="1"/><rect x="5" y="5" width="1" height="1"/><rect x="7" y="5" width="1" height="1"/><rect x="9" y="5" width="1" height="1"/><rect x="3" y="7" width="1" height="1"/><rect x="5" y="7" width="1" height="1"/><rect x="7" y="7" width="1" height="1"/><rect x="9" y="7" width="1" height="1"/><rect x="3" y="9" width="1" height="1"/><rect x="5" y="9" width="1" height="1"/><rect x="7" y="9" width="1" height="1"/></g></svg><span class="dtx">Mar 14, 2019</span></div>
<div class="a dt" style="left:55px;top:623px">Diamond in the Rough Mine</div>
<div class="a dt" style="left:248px;top:623px">Vincent</div>
<div class="a dt" style="left:415px;top:623px">WaterCleaner Max</div>
<div class="a dt" style="left:626px;top:623px">$2</div>
<div class="a dt" style="left:705px;top:623px">25,080</div>
<div class="a chip" style="left:786px;top:625px"><svg class="a" style="left:7px;top:-2px" width="14" height="14" viewBox="0 0 14 14"><rect x="0.6" y="1.6" width="12" height="11" rx="2" fill="none" stroke="#8c8c90" stroke-width="1"/><line x1="3.5" y1="0.5" x2="3.5" y2="2.5" stroke="#8c8c90"/><line x1="10.5" y1="0.5" x2="10.5" y2="2.5" stroke="#8c8c90"/><g fill="#9a9a9e"><rect x="3" y="5" width="1" height="1"/><rect x="5" y="5" width="1" height="1"/><rect x="7" y="5" width="1" height="1"/><rect x="9" y="5" width="1" height="1"/><rect x="3" y="7" width="1" height="1"/><rect x="5" y="7" width="1" height="1"/><rect x="7" y="7" width="1" height="1"/><rect x="9" y="7" width="1" height="1"/><rect x="3" y="9" width="1" height="1"/><rect x="5" y="9" width="1" height="1"/><rect x="7" y="9" width="1" height="1"/></g></svg><span class="dtx">Apr 8, 2019</span></div>
<div class="a dt" style="left:55px;top:658px">Sugar Pine Ski resort</div>
<div class="a dt" style="left:248px;top:658px">Laura</div>
<div class="a dt" style="left:415px;top:658px">GroundCleaner Nano</div>
<div class="a dt" style="left:626px;top:658px">$2</div>
<div class="a dt" style="left:705px;top:658px">3,960</div>
<div class="a chip" style="left:786px;top:660px"><svg class="a" style="left:7px;top:-2px" width="14" height="14" viewBox="0 0 14 14"><rect x="0.6" y="1.6" width="12" height="11" rx="2" fill="none" stroke="#8c8c90" stroke-width="1"/><line x1="3.5" y1="0.5" x2="3.5" y2="2.5" stroke="#8c8c90"/><line x1="10.5" y1="0.5" x2="10.5" y2="2.5" stroke="#8c8c90"/><g fill="#9a9a9e"><rect x="3" y="5" width="1" height="1"/><rect x="5" y="5" width="1" height="1"/><rect x="7" y="5" width="1" height="1"/><rect x="9" y="5" width="1" height="1"/><rect x="3" y="7" width="1" height="1"/><rect x="5" y="7" width="1" height="1"/><rect x="7" y="7" width="1" height="1"/><rect x="9" y="7" width="1" height="1"/><rect x="3" y="9" width="1" height="1"/><rect x="5" y="9" width="1" height="1"/><rect x="7" y="9" width="1" height="1"/></g></svg><span class="dtx">Apr 17, 2019</span></div>
<div class="a dt" style="left:55px;top:693px">Charlotte &amp; Wilbur's Pig Farm</div>
<div class="a dt" style="left:248px;top:693px">Julie</div>
<div class="a dt" style="left:415px;top:693px">WaterCleaner Nano</div>
<div class="a dt" style="left:626px;top:693px">$3</div>
<div class="a dt" style="left:705px;top:693px">4,050</div>
<div class="a chip" style="left:786px;top:695px"><svg class="a" style="left:7px;top:-2px" width="14" height="14" viewBox="0 0 14 14"><rect x="0.6" y="1.6" width="12" height="11" rx="2" fill="none" stroke="#8c8c90" stroke-width="1"/><line x1="3.5" y1="0.5" x2="3.5" y2="2.5" stroke="#8c8c90"/><line x1="10.5" y1="0.5" x2="10.5" y2="2.5" stroke="#8c8c90"/><g fill="#9a9a9e"><rect x="3" y="5" width="1" height="1"/><rect x="5" y="5" width="1" height="1"/><rect x="7" y="5" width="1" height="1"/><rect x="9" y="5" width="1" height="1"/><rect x="3" y="7" width="1" height="1"/><rect x="5" y="7" width="1" height="1"/><rect x="7" y="7" width="1" height="1"/><rect x="9" y="7" width="1" height="1"/><rect x="3" y="9" width="1" height="1"/><rect x="5" y="9" width="1" height="1"/><rect x="7" y="9" width="1" height="1"/></g></svg><span class="dtx">Apr 23, 2019</span></div>
<div class="a dt" style="left:55px;top:728px">Tarascon Nature Reserve</div>
<div class="a dt" style="left:248px;top:728px">Laura</div>
<div class="a dt" style="left:415px;top:728px">AirCleaner Nano</div>
<div class="a dt" style="left:626px;top:728px">$3</div>
<div class="a dt" style="left:705px;top:728px">5,400</div>
<div class="a chip" style="left:786px;top:730px"><svg class="a" style="left:7px;top:-2px" width="14" height="14" viewBox="0 0 14 14"><rect x="0.6" y="1.6" width="12" height="11" rx="2" fill="none" stroke="#8c8c90" stroke-width="1"/><line x1="3.5" y1="0.5" x2="3.5" y2="2.5" stroke="#8c8c90"/><line x1="10.5" y1="0.5" x2="10.5" y2="2.5" stroke="#8c8c90"/><g fill="#9a9a9e"><rect x="3" y="5" width="1" height="1"/><rect x="5" y="5" width="1" height="1"/><rect x="7" y="5" width="1" height="1"/><rect x="9" y="5" width="1" height="1"/><rect x="3" y="7" width="1" height="1"/><rect x="5" y="7" width="1" height="1"/><rect x="7" y="7" width="1" height="1"/><rect x="9" y="7" width="1" height="1"/><rect x="3" y="9" width="1" height="1"/><rect x="5" y="9" width="1" height="1"/><rect x="7" y="9" width="1" height="1"/></g></svg><span class="dtx">May 14, 2019</span></div>
<div class="a dt" style="left:55px;top:763px">Charlotte &amp; Wilbur's Pig Farm</div>
<div class="a dt" style="left:248px;top:763px">Julie</div>
<div class="a dt" style="left:415px;top:763px">AirCleaner Regular</div>
<div class="a dt" style="left:626px;top:763px">$2</div>
<div class="a dt" style="left:705px;top:763px">13,200</div>
<div class="a chip" style="left:786px;top:765px"><svg class="a" style="left:7px;top:-2px" width="14" height="14" viewBox="0 0 14 14"><rect x="0.6" y="1.6" width="12" height="11" rx="2" fill="none" stroke="#8c8c90" stroke-width="1"/><line x1="3.5" y1="0.5" x2="3.5" y2="2.5" stroke="#8c8c90"/><line x1="10.5" y1="0.5" x2="10.5" y2="2.5" stroke="#8c8c90"/><g fill="#9a9a9e"><rect x="3" y="5" width="1" height="1"/><rect x="5" y="5" width="1" height="1"/><rect x="7" y="5" width="1" height="1"/><rect x="9" y="5" width="1" height="1"/><rect x="3" y="7" width="1" height="1"/><rect x="5" y="7" width="1" height="1"/><rect x="7" y="7" width="1" height="1"/><rect x="9" y="7" width="1" height="1"/><rect x="3" y="9" width="1" height="1"/><rect x="5" y="9" width="1" height="1"/><rect x="7" y="9" width="1" height="1"/></g></svg><span class="dtx">May 22, 2019</span></div>
<div class="a dt" style="left:55px;top:798px">Coastal Oil &amp; Gas</div>
<div class="a dt" style="left:248px;top:798px">Cecile</div>
<div class="a dt" style="left:415px;top:798px">AirCleaner Max</div>
<div class="a dt" style="left:626px;top:798px">$1</div>
<div class="a dt" style="left:705px;top:798px">19,800</div>
<div class="a chip" style="left:786px;top:800px"><svg class="a" style="left:7px;top:-2px" width="14" height="14" viewBox="0 0 14 14"><rect x="0.6" y="1.6" width="12" height="11" rx="2" fill="none" stroke="#8c8c90" stroke-width="1"/><line x1="3.5" y1="0.5" x2="3.5" y2="2.5" stroke="#8c8c90"/><line x1="10.5" y1="0.5" x2="10.5" y2="2.5" stroke="#8c8c90"/><g fill="#9a9a9e"><rect x="3" y="5" width="1" height="1"/><rect x="5" y="5" width="1" height="1"/><rect x="7" y="5" width="1" height="1"/><rect x="9" y="5" width="1" height="1"/><rect x="3" y="7" width="1" height="1"/><rect x="5" y="7" width="1" height="1"/><rect x="7" y="7" width="1" height="1"/><rect x="9" y="7" width="1" height="1"/><rect x="3" y="9" width="1" height="1"/><rect x="5" y="9" width="1" height="1"/><rect x="7" y="9" width="1" height="1"/></g></svg><span class="dtx">May 22, 2019</span></div>
<div class="a dt" style="left:55px;top:833px">Diamond in the Rough Mine</div>
<div class="a dt" style="left:248px;top:833px">Vincent</div>
<div class="a dt" style="left:415px;top:833px">GroundCleaner Nano</div>
<div class="a dt" style="left:626px;top:833px">$2</div>
<div class="a dt" style="left:705px;top:833px">3,960</div>
<div class="a chip" style="left:786px;top:835px"><svg class="a" style="left:7px;top:-2px" width="14" height="14" viewBox="0 0 14 14"><rect x="0.6" y="1.6" width="12" height="11" rx="2" fill="none" stroke="#8c8c90" stroke-width="1"/><line x1="3.5" y1="0.5" x2="3.5" y2="2.5" stroke="#8c8c90"/><line x1="10.5" y1="0.5" x2="10.5" y2="2.5" stroke="#8c8c90"/><g fill="#9a9a9e"><rect x="3" y="5" width="1" height="1"/><rect x="5" y="5" width="1" height="1"/><rect x="7" y="5" width="1" height="1"/><rect x="9" y="5" width="1" height="1"/><rect x="3" y="7" width="1" height="1"/><rect x="5" y="7" width="1" height="1"/><rect x="7" y="7" width="1" height="1"/><rect x="9" y="7" width="1" height="1"/><rect x="3" y="9" width="1" height="1"/><rect x="5" y="9" width="1" height="1"/><rect x="7" y="9" width="1" height="1"/></g></svg><span class="dtx">Jun 11, 2019</span></div>
<div class="a dt" style="left:55px;top:868px">Tarascon Nature Reserve</div>
<div class="a dt" style="left:248px;top:868px">Laura</div>
<div class="a dt" style="left:415px;top:868px">WaterCleaner Regular</div>
<div class="a dt" style="left:626px;top:868px">$4</div>
<div class="a dt" style="left:705px;top:868px">16,720</div>
<div class="a chip" style="left:786px;top:870px"><svg class="a" style="left:7px;top:-2px" width="14" height="14" viewBox="0 0 14 14"><rect x="0.6" y="1.6" width="12" height="11" rx="2" fill="none" stroke="#8c8c90" stroke-width="1"/><line x1="3.5" y1="0.5" x2="3.5" y2="2.5" stroke="#8c8c90"/><line x1="10.5" y1="0.5" x2="10.5" y2="2.5" stroke="#8c8c90"/><g fill="#9a9a9e"><rect x="3" y="5" width="1" height="1"/><rect x="5" y="5" width="1" height="1"/><rect x="7" y="5" width="1" height="1"/><rect x="9" y="5" width="1" height="1"/><rect x="3" y="7" width="1" height="1"/><rect x="5" y="7" width="1" height="1"/><rect x="7" y="7" width="1" height="1"/><rect x="9" y="7" width="1" height="1"/><rect x="3" y="9" width="1" height="1"/><rect x="5" y="9" width="1" height="1"/><rect x="7" y="9" width="1" height="1"/></g></svg><span class="dtx">Jun 11, 2019</span></div>
<div class="a" style="left:45px;top:217px;width:193px;height:45px;border:1px solid #3c3ecb"></div>
<div class="a" style="left:231px;top:255px;width:7px;height:7px;background:#3c3ecb;border-left:1px solid #fff;border-top:1px solid #fff"></div>
<div class="a" style="left:900px;top:214px;width:17px;height:668px;background:#f1f1f1"></div>
<div class="a" style="left:902px;top:231px;width:13px;height:333px;background:#c1c1c1"></div>
<div class="a" style="left:905px;top:221px;width:0;height:0;border-left:3.5px solid transparent;border-right:3.5px solid transparent;border-bottom:4px solid #a3a3a3"></div>
<div class="a" style="left:905px;top:871px;width:0;height:0;border-left:3.5px solid transparent;border-right:3.5px solid transparent;border-top:4px solid #505050"></div>
<svg class="a" style="left:10px;top:179px" width="17" height="17" viewBox="0 0 17 17"><circle cx="8.5" cy="8.5" r="8.5" fill="#9a9dab"/><path d="M8.5 1.5 L8.5 8 L2 8 Z" fill="#fff"/><path d="M9.2 9 L15 9 L9.2 15.2 Z" fill="#fff"/></svg>
</div>

<!-- RIGHT PANEL -->
<div class="a" style="left:1444px;top:166px;width:42px;height:716px;background:#e8e9ee"></div>
<div class="a" style="left:1444px;top:166px;width:42px;height:41px;background:#3b3fc6"></div>
<div class="a" style="left:1444px;top:249px;width:42px;height:1px;background:#d3d4d9"></div>
<div class="a" style="left:1444px;top:881px;width:42px;height:1px;background:#d3d4d9"></div>

<!-- FORMULA BAR -->
<div class="a" style="left:0;top:882px;width:1486px;height:32px;background:#dfe0e5"></div>
<div class="a" style="left:0;top:882px;width:38px;height:32px;background:#3b3fc6"></div>
<div class="a" style="left:51px;top:888px;font-size:14px;line-height:16px;color:#4b5068;white-space:nowrap;letter-spacing:0.2px">Company name</div>

<!-- title icons -->
<svg class="a" style="left:1400px;top:14px" width="75" height="20" viewBox="1400 14 75 20">
<path d="M1405.3 23.6 L1409.4 27.9 L1417.8 18.6" fill="none" stroke="#fff" stroke-width="1.9"/>
<path d="M1455.2 18.6 L1467 29.6 M1467 18.6 L1455.2 29.6" fill="none" stroke="#fff" stroke-width="1.9"/>
</svg>
<!-- plus tab -->
<svg class="a" style="left:478px;top:131px" width="16" height="16" viewBox="478 131 16 16">
<path d="M479.5 139.2 H493.5 M486.5 132.5 V146" stroke="#3b3f5c" stroke-width="1.9"/>
</svg>
<!-- right panel icons -->
<svg class="a" style="left:1444px;top:166px" width="42" height="80" viewBox="1444 166 42 80">
<path d="M1457.9 179.9 H1472.8 L1467.8 188.5 V193.8 L1463.3 195 V188.5 Z" fill="none" stroke="#fff" stroke-width="1.9" stroke-linejoin="miter"/>
<g fill="#2b2b33"><rect x="1457" y="222.8" width="5" height="1.5"/><rect x="1457" y="228.1" width="5" height="1.5"/><rect x="1457" y="233.4" width="5" height="1.5"/></g>
<rect x="1465.5" y="221.8" width="6.6" height="14.2" fill="none" stroke="#1f2030" stroke-width="1.6"/>
</svg>
<svg class="a" style="left:1455px;top:852px" width="20" height="16" viewBox="1455 852 20 16">
<path d="M1464.8 857.5 L1461.2 861 L1464.8 864.5 M1469.8 857.5 L1466.2 861 L1469.8 864.5" fill="none" stroke="#15161f" stroke-width="1.9"/>
</svg>
<!-- megaphone -->
<svg class="a" style="left:1392px;top:783px" width="48" height="48" viewBox="1392 783 48 48">
<circle cx="1416" cy="807" r="20.6" fill="#d8ccfb"/>
<circle cx="1416" cy="807" r="19.9" fill="#22184a"/>
<path d="M1410.4 803.6 H1407.8 Q1405 804.2 1405 808 Q1405 811.8 1407.8 812.2 H1410.4 Z" fill="#efd98a"/>
<path d="M1411.6 803.3 L1421.2 798.3 Q1422.3 797.9 1422.6 799 L1425.1 811.6 L1411.8 811.4 Z" fill="#efd98a"/>
<path d="M1425.3 802.5 Q1427.7 803.3 1427.7 805 Q1427.5 806.7 1425.9 807.3 Z" fill="#efd98a"/>
<path d="M1413.3 811.4 Q1413.8 815.2 1418.4 816.6" fill="none" stroke="#efd98a" stroke-width="2.2" stroke-linecap="round"/>
</svg>
<!-- fx formula -->
<div class="a" style="left:10px;top:891px;font-size:18px;line-height:20px;font-style:italic;color:#fff;white-space:nowrap">fx</div>
</body></html>
